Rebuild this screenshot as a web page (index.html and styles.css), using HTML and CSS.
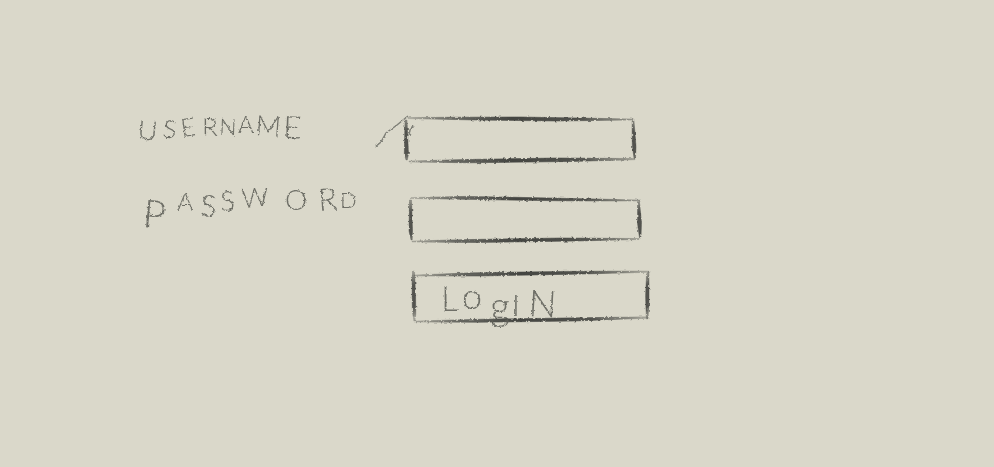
FILE: index.html
```html
<!DOCTYPE html>
<html lang="en">
<head>
<meta charset="utf-8">
<title>Login</title>
<link rel="stylesheet" href="styles.css">
</head>
<body>
<svg class="defs" width="0" height="0" aria-hidden="true">
  <defs>
    <filter id="pencil" filterUnits="userSpaceOnUse" x="-40" y="-10" width="300" height="90" color-interpolation-filters="sRGB">
      <feTurbulence type="fractalNoise" baseFrequency="0.35" numOctaves="2" seed="4" result="n"/>
      <feDisplacementMap in="SourceGraphic" in2="n" scale="3" xChannelSelector="R" yChannelSelector="G" result="d"/>
      <feGaussianBlur in="d" stdDeviation="0.65"/>
    </filter>
    <linearGradient id="across" gradientUnits="userSpaceOnUse" x1="0" y1="0" x2="236" y2="0">
      <stop offset="0" stop-color="#4b4c48" stop-opacity=".25"/>
      <stop offset=".2" stop-color="#4b4c48" stop-opacity=".8"/>
      <stop offset=".45" stop-color="#444541"/>
      <stop offset=".75" stop-color="#444541" stop-opacity=".9"/>
      <stop offset="1" stop-color="#4b4c48" stop-opacity=".25"/>
    </linearGradient>
    <linearGradient id="down" gradientUnits="userSpaceOnUse" x1="0" y1="0" x2="0" y2="48">
      <stop offset="0" stop-color="#4b4c48" stop-opacity=".4"/>
      <stop offset=".3" stop-color="#444541" stop-opacity=".9"/>
      <stop offset=".75" stop-color="#444541" stop-opacity=".9"/>
      <stop offset="1" stop-color="#4b4c48" stop-opacity=".35"/>
    </linearGradient>
  </defs>
</svg>
<form class="login">
  <div class="row row-user">
    <label class="label" for="user">
      <svg class="ink" width="230" height="44">
        <text class="letters" x="3 28 48 68 85 104 121 149" y="22 20 20 19 18 16 18 21" rotate="6 8 -8 0 2 0 4 2"><tspan font-size="27">U</tspan><tspan font-size="25">S</tspan><tspan font-size="25">E</tspan><tspan font-size="26">R</tspan><tspan font-size="23">N</tspan><tspan font-size="24">A</tspan><tspan font-size="28">M</tspan><tspan font-size="31">E</tspan></text>
      </svg>
    </label>
    <div class="field">
      <svg class="ink" width="230" height="44" aria-hidden="true">
        <g class="strokes">
          <path class="h" d="M2 .5 L55 .2 L115 0 L228 2 L228 3 L150 4 L70 3 L2 1.6Z"/>
          <path class="h" d="M3 44 L60 42.5 L150 41 L229 41.5 L229 42.7 L165 44.5 L65 45.8 L3 45Z"/>
          <path class="v" d="M-1 3 L1 3 L2.5 37 L1.3 43 L0 43 L-1.7 37Z"/>
          <path class="v" d="M226 4 L228 3.5 L230 30 L229.5 41 L228 41.5 L226.3 28Z"/>
        </g>
        <g class="strokes light">
          <path d="M2-1 L-9 8 L-20 16 L-25 25 L-31 30"/>
          <path d="M8 9 L4 13 L3 19"/>
        </g>
      </svg>
      <input class="input" id="user" type="text">
    </div>
  </div>
  <div class="row row-pass">
    <label class="label" for="pass">
      <svg class="ink" width="230" height="44">
        <text class="letters" y="29 13 18 13 10 12 13 10" x="8 43 66 86 108 151 185 206" rotate="5 0 3 0 -4 0 -4 0"><tspan font-size="39">P</tspan><tspan font-size="25">A</tspan><tspan font-size="30">S</tspan><tspan font-size="28">S</tspan><tspan font-size="27">W</tspan><tspan font-size="28">O</tspan><tspan font-size="31">R</tspan><tspan font-size="22">D</tspan></text>
      </svg>
    </label>
    <div class="field">
      <svg class="ink" width="230" height="44" aria-hidden="true">
        <g class="strokes">
          <path class="h" d="M0-.5 L55-1.6 L115-.5 L229 2 L229 3 L150 2.8 L70 1.6 L0 .5Z"/>
          <path class="h" d="M1 43 L60 41.5 L150 40 L228 40.5 L228 41.5 L165 43 L65 44.5 L1 44Z"/>
          <path class="v" d="M-1.5 2 L.5 2 L1.5 32 L1.2 42 L0 42 L-2 33Z"/>
          <path class="v" d="M226.5 4 L228.5 3.5 L230.5 25 L230 39 L228.5 40 L226.6 26Z"/>
        </g>
      </svg>
      <input class="input" id="pass" type="password">
    </div>
  </div>
  <div class="row row-action">
    <button class="field button" type="button">
      <svg class="ink" width="236" height="50">
        <g class="strokes">
          <path class="h" d="M0 4 L60 1.8 L150 .4 L236 0 L236 1.3 L160 3.2 L65 5 L0 5Z"/>
          <path class="h" d="M2 50 L70 48.2 L150 47 L234 45.8 L234 47.2 L160 50 L65 51.3 L2 51Z"/>
          <path class="v" d="M-1.5 0 L.5 0 L1.6 25 L1.8 43 L1 50 L-.2 50 L-1.7 38 L-2 10Z"/>
          <path class="v" d="M232.5 3 L235 0 L235 30 L234 48 L232.3 48 L231.6 25Z"/>
        </g>
        <text class="letters" x="27 48 76 98 114" y="40 38 49 45 45" rotate="0 0 0 0 3"><tspan font-size="35">L</tspan><tspan font-size="36">o</tspan><tspan font-size="39">g</tspan><tspan font-size="30">I</tspan><tspan font-size="37">N</tspan></text>
      </svg>
    </button>
  </div>
</form>
</body>
</html>
```
FILE: styles.css
```css
* { box-sizing: border-box; }
body {
  margin: 0;
  min-height: 467px;
  background: #dad8ca;
  font-family: Lato, "Liberation Sans", sans-serif;
}
.defs { display: block; height: 0; }
.login {
  display: flex;
  flex-direction: column;
  padding: 117px 0 0 134px;
}
.row { display: flex; height: 44px; }
.row-user { gap: 42px; margin-bottom: 37px; }
.row-pass { gap: 47px; margin-bottom: 29px; }
.row-action { height: 50px; padding-left: 280px; }
.label { width: 230px; height: 44px; }
.field { position: relative; width: 230px; height: 44px; }
.ink { display: block; overflow: visible; }
.field .ink { position: absolute; top: 0; left: 0; }
.input {
  position: relative;
  width: 100%;
  height: 100%;
  border: 0;
  padding: 0 12px;
  background: transparent;
  outline: none;
}
.button {
  width: 236px;
  height: 50px;
  padding: 0;
  border: 0;
  background: transparent;
}
.letters {
  font-family: Lato, "Liberation Sans", sans-serif;
  font-weight: 300;
  fill: #5c5d56;
  fill-opacity: .85;
  filter: url(#pencil);
}
.strokes { filter: url(#pencil); }
.h { fill: url(#across); stroke: url(#across); stroke-width: .6; }
.v { fill: url(#down); stroke: url(#down); stroke-width: .5; }
.light { fill: none; stroke: #70716a; stroke-width: 1.5; stroke-opacity: .85; }
```
